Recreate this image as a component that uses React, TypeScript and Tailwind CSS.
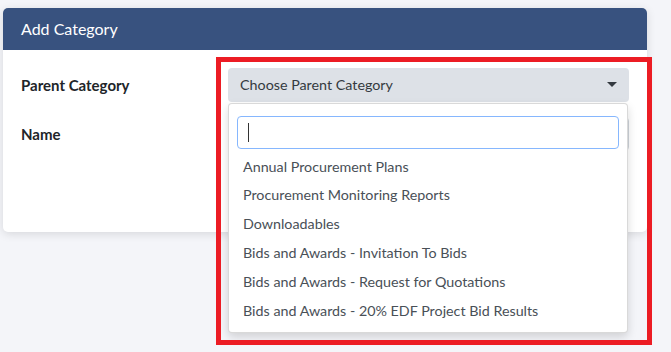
import React from 'react';

const options = [
  'Annual Procurement Plans',
  'Procurement Monitoring Reports',
  'Downloadables',
  'Bids and Awards - Invitation To Bids',
  'Bids and Awards - Request for Quotations',
  'Bids and Awards - 20% EDF Project Bid Results',
];

const App = () => {
  return (
    <div
      className="relative w-[671px] h-[352px] overflow-hidden bg-[#f4f5f9] pt-[8px] pl-[3px]"
      style={{ fontFamily: 'Lato, "Open Sans", sans-serif' }}
    >
      <div className="w-[644px] bg-white rounded-[5px] shadow-[0_2px_10px_rgba(0,0,0,0.12)] pb-[34px]">
        <div className="h-[42px] bg-[#38527f] rounded-t-[5px] px-[18px] flex items-center text-white text-[16px]">
          Add Category
        </div>
        <div className="px-[18px] pt-[18px]">
          <div className="flex">
            <div className="w-[207px] flex flex-col">
              <div className="h-[34px] flex items-center font-bold text-[15px] text-[#212529]">Parent Category</div>
              <div className="h-[34px] mt-[15px] flex items-center font-bold text-[15px] text-[#212529]">Name</div>
            </div>
            <div className="w-[401px] relative flex flex-col">
              <div className="h-[34px] bg-[#dde1e7] rounded-[4px] flex items-center justify-between pl-[12px] pr-[12px] text-[14.3px] text-[#343a40]">
                <span>Choose Parent Category</span>
                <svg width="10" height="6" viewBox="0 0 10 6">
                  <path d="M0 0h10L5 5z" fill="#343a40" />
                </svg>
              </div>
              <div className="h-[34px] mt-[15px] border border-[#ced4da] rounded-[4px]" />
              <div className="h-[34px] w-[70px] mt-[13px] bg-[#0d6efd] rounded-[4px]" />
              <div className="absolute top-[35px] left-0 w-[400px] h-[230px] bg-white border border-black/15 rounded-[4px] shadow-[0_4px_10px_rgba(0,0,0,0.15)]">
                <div className="mx-[8px] mt-[12px] h-[33px] border border-[#86b7fe] rounded-[4px] flex items-center pl-[10px]">
                  <div className="w-px h-[19px] bg-[#333]" />
                </div>
                <ul className="mt-[3px] text-[14.3px] text-[#495057]">
                  {options.map((o) => (
                    <li key={o} className="h-[28.8px] flex items-center pl-[14px]">
                      {o}
                    </li>
                  ))}
                </ul>
              </div>
            </div>
          </div>
        </div>
      </div>
      <div className="absolute left-[216px] top-[57px] w-[436px] h-[288px] border-[5px] border-[#ec1c24]" />
    </div>
  );
};

export default App;
